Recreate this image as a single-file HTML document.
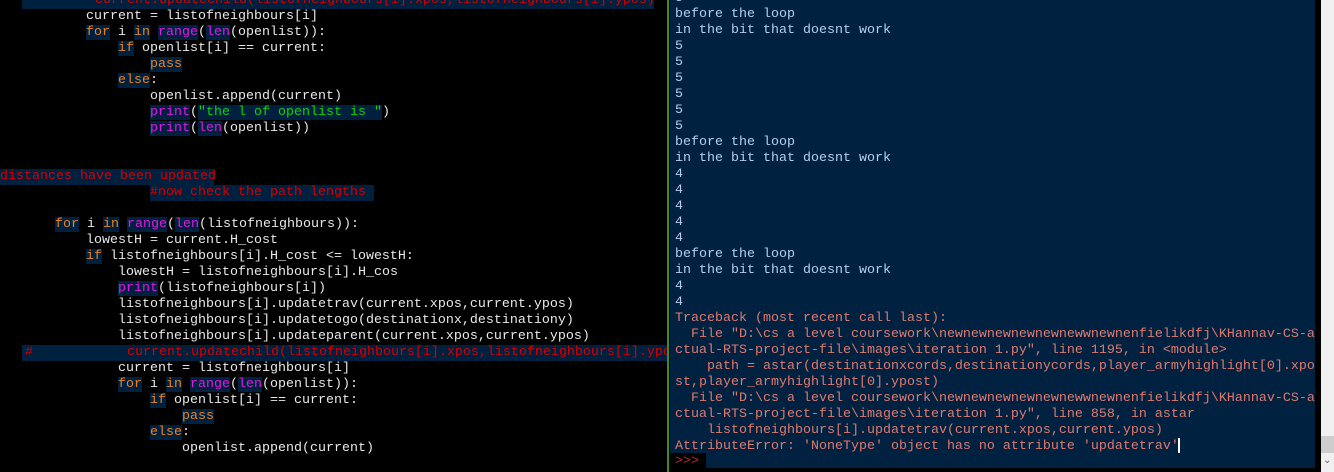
<!DOCTYPE html>
<html><head><meta charset="utf-8"><style>
html,body{margin:0;padding:0;background:#000;width:1334px;height:472px;overflow:hidden;position:relative}
.l{position:absolute;height:16px;line-height:16px;font-family:"Liberation Mono",monospace;font-size:13.33px;color:#e8e8e8;white-space:pre}
.k{color:#e8841c;background:#002040}
.b{color:#e01ae0;background:#002040}
.s{color:#10d010;background:#002040}
.c{color:#d40000}
.hl{position:absolute;height:16px;background:#002040}
#right{position:absolute;left:670px;top:0;width:645px;height:453px;background:#002240}
.r{position:absolute;left:675px;height:16px;line-height:16px;font-family:"Liberation Mono",monospace;font-size:13.33px;color:#b8cdf0;white-space:pre}
.e{color:#e07a70}
</style></head><body>
<div class="hl" style="left:22px;top:-7px;width:632px"></div>
<div class="hl" style="left:0;top:169px;width:214px"></div>
<div class="hl" style="left:150px;top:185px;width:224px"></div>
<div class="hl" style="left:22px;top:345px;width:645px"></div>

<div class="l c" style="left:95px;top:-7px">current.updatechild(listofneighbours[i].xpos,listofneighbours[i].ypos)</div>
<div class="l" style="left:86px;top:9px">current = listofneighbours[i]</div>
<div class="l" style="left:86px;top:25px"><span class="k">for</span> i <span class="k">in</span> <span class="b">range</span>(<span class="b">len</span>(openlist)):</div>
<div class="l" style="left:118px;top:41px"><span class="k">if</span> openlist[i] == current:</div>
<div class="l" style="left:150px;top:57px"><span class="k">pass</span></div>
<div class="l" style="left:118px;top:73px"><span class="k">else</span>:</div>
<div class="l" style="left:150px;top:89px">openlist.append(current)</div>
<div class="l" style="left:150px;top:105px"><span class="b">print</span>(<span class="s">"the l of openlist is "</span>)</div>
<div class="l" style="left:150px;top:121px"><span class="b">print</span>(<span class="b">len</span>(openlist))</div>
<div class="l c" style="left:0;top:169px">distances have been updated</div>
<div class="l c" style="left:150px;top:185px">#now check the path lengths </div>
<div class="l" style="left:55px;top:217px"><span class="k">for</span> i <span class="k">in</span> <span class="b">range</span>(<span class="b">len</span>(listofneighbours)):</div>
<div class="l" style="left:86px;top:233px">lowestH = current.H_cost</div>
<div class="l" style="left:86px;top:249px"><span class="k">if</span> listofneighbours[i].H_cost &lt;= lowestH:</div>
<div class="l" style="left:118px;top:265px">lowestH = listofneighbours[i].H_cos</div>
<div class="l" style="left:118px;top:281px"><span class="b">print</span>(listofneighbours[i])</div>
<div class="l" style="left:118px;top:297px">listofneighbours[i].updatetrav(current.xpos,current.ypos)</div>
<div class="l" style="left:118px;top:313px">listofneighbours[i].updatetogo(destinationx,destinationy)</div>
<div class="l" style="left:118px;top:329px">listofneighbours[i].updateparent(current.xpos,current.ypos)</div>
<div class="l c" style="left:25px;top:345px">#</div>
<div class="l c" style="left:127px;top:345px;width:540px;overflow:hidden">current.updatechild(listofneighbours[i].xpos,listofneighbours[i].ypos)</div>
<div class="l" style="left:118px;top:361px">current = listofneighbours[i]</div>
<div class="l" style="left:118px;top:377px"><span class="k">for</span> i <span class="k">in</span> <span class="b">range</span>(<span class="b">len</span>(openlist)):</div>
<div class="l" style="left:150px;top:393px"><span class="k">if</span> openlist[i] == current:</div>
<div class="l" style="left:182px;top:409px"><span class="k">pass</span></div>
<div class="l" style="left:150px;top:425px"><span class="k">else</span>:</div>
<div class="l" style="left:182px;top:441px">openlist.append(current)</div>

<div style="position:absolute;left:667px;top:0;width:2px;height:472px;background:#3c8c2c"></div>
<div id="right"></div>
<div style="position:absolute;left:706px;top:453px;width:609px;height:15px;background:#002240"></div>
<div style="position:absolute;left:1321px;top:0;width:13px;height:472px;background:#f0f0f0"></div>
<div style="position:absolute;left:1321px;top:436px;width:13px;height:17px;background:#cdcdcd"></div>
<div style="position:absolute;left:1323px;top:455px;font:10px 'DejaVu Sans',sans-serif;color:#606060">&#8964;</div>

<div class="r" style="top:-9px">5</div>
<div class="r" style="top:7px">before the loop</div>
<div class="r" style="top:23px">in the bit that doesnt work</div>
<div class="r" style="top:39px">5</div>
<div class="r" style="top:55px">5</div>
<div class="r" style="top:71px">5</div>
<div class="r" style="top:87px">5</div>
<div class="r" style="top:103px">5</div>
<div class="r" style="top:119px">5</div>
<div class="r" style="top:135px">before the loop</div>
<div class="r" style="top:151px">in the bit that doesnt work</div>
<div class="r" style="top:167px">4</div>
<div class="r" style="top:183px">4</div>
<div class="r" style="top:199px">4</div>
<div class="r" style="top:215px">4</div>
<div class="r" style="top:231px">4</div>
<div class="r" style="top:247px">before the loop</div>
<div class="r" style="top:263px">in the bit that doesnt work</div>
<div class="r" style="top:279px">4</div>
<div class="r" style="top:295px">4</div>
<div class="r e" style="top:311px">Traceback (most recent call last):</div>
<div class="r e" style="top:327px">  File "D:\cs a level coursework\newnewnewnewnewnewwnewnenfielikdfj\KHannav-CS-a</div>
<div class="r e" style="top:343px">ctual-RTS-project-file\images\iteration 1.py", line 1195, in &lt;module&gt;</div>
<div class="r e" style="top:359px">    path = astar(destinationxcords,destinationycords,player_armyhighlight[0].xpo</div>
<div class="r e" style="top:375px">st,player_armyhighlight[0].ypost)</div>
<div class="r e" style="top:391px">  File "D:\cs a level coursework\newnewnewnewnewnewwnewnenfielikdfj\KHannav-CS-a</div>
<div class="r e" style="top:407px">ctual-RTS-project-file\images\iteration 1.py", line 858, in astar</div>
<div class="r e" style="top:423px">    listofneighbours[i].updatetrav(current.xpos,current.ypos)</div>
<div class="r e" style="top:439px">AttributeError: 'NoneType' object has no attribute 'updatetrav'</div>
<div style="position:absolute;left:1178px;top:438px;width:2px;height:15px;background:#fff"></div>
<div class="r" style="top:454px;color:#b03030">&gt;&gt;&gt;</div>
</body></html>
